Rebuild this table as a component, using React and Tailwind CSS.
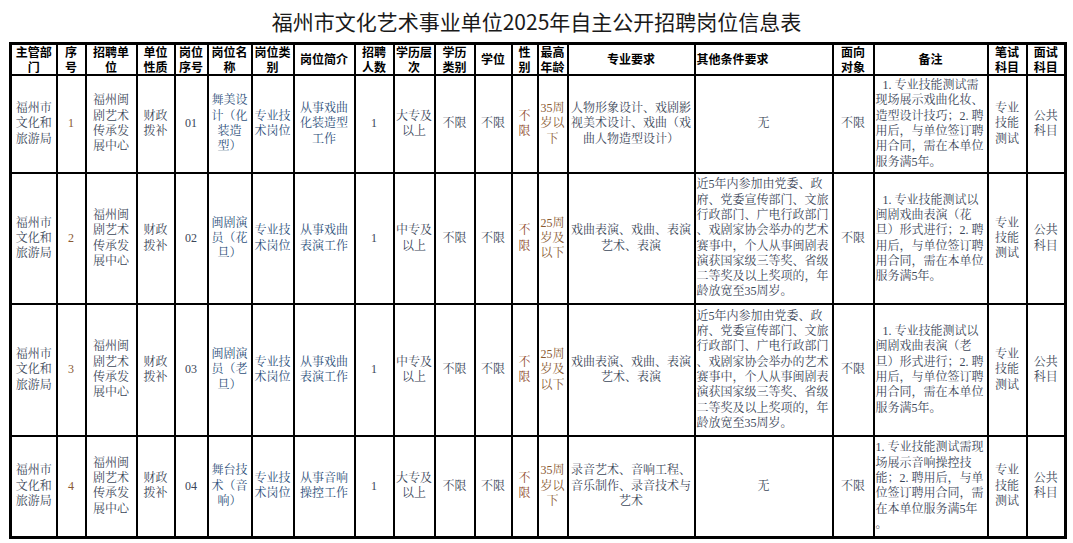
import React from 'react'

const serif = "font-['Liberation_Serif','Noto_Serif_CJK_SC','Noto_Sans_CJK_SC',serif]"

const colWidths = [
  'w-[46px]', 'w-[29px]', 'w-[51px]', 'w-[38px]', 'w-[33px]', 'w-[44px]', 'w-[42px]',
  'w-[61px]', 'w-[39px]', 'w-[41px]', 'w-[40px]', 'w-[37px]', 'w-[26px]', 'w-[30px]',
  'w-[127px]', 'w-[138px]', 'w-[41px]', 'w-[114px]', 'w-[39px]', 'w-[39px]',
]

const headers = [
  ['主管部', '门'], ['序', '号'], ['招聘单', '位'], ['单位', '性质'], ['岗位', '序号'],
  ['岗位名', '称'], ['岗位类', '别'], ['岗位简介'], ['招聘', '人数'], ['学历层', '次'],
  ['学历', '类别'], ['学位'], ['性', '别'], ['最高', '年龄'], ['专业要求'],
  ['其他条件要求'], ['面向', '对象'], ['备注'], ['笔试', '科目'], ['面试', '科目'],
]

const slate = 'text-[#3b4658]'
const brown = 'text-[#8a5a32]'
const rust = 'text-[#8f4a2c]'
const blue = 'text-[#2d4f7a]'

const otherReq = [
  '近5年内参加由党委、政',
  '府、党委宣传部门、文旅',
  '行政部门、广电行政部门',
  '、戏剧家协会举办的艺术',
  '赛事中，个人从事闽剧表',
  '演获国家级三等奖、省级',
  '二等奖及以上奖项的，年',
  '龄放宽至35周岁。',
]

const rows = [
  {
    h: 'h-[98px]',
    cells: [
      { lines: ['福州市', '文化和', '旅游局'], cls: slate },
      { lines: ['1'], cls: brown },
      { lines: ['福州闽', '剧艺术', '传承发', '展中心'], cls: slate },
      { lines: ['财政', '拨补'], cls: slate },
      { lines: ['01'], cls: slate },
      { lines: ['舞美设', '计（化', '装造', '型）'], cls: blue },
      { lines: ['专业技', '术岗位'], cls: blue },
      { lines: ['从事戏曲', '化装造型', '工作'], cls: blue },
      { lines: ['1'], cls: slate },
      { lines: ['大专及', '以上'], cls: slate },
      { lines: ['不限'], cls: slate },
      { lines: ['不限'], cls: slate },
      { lines: ['不', '限'], cls: rust },
      { lines: ['35周', '岁以', '下'], cls: brown },
      { lines: ['人物形象设计、戏剧影', '视美术设计、戏曲（戏', '曲人物造型设计）'], cls: slate },
      { lines: ['无'], cls: slate },
      { lines: ['不限'], cls: slate },
      {
        lines: ['1. 专业技能测试需', '现场展示戏曲化妆、', '造型设计技巧；2. 聘', '用后，与单位签订聘', '用合同，需在本单位', '服务满5年。'],
        cls: slate + ' text-left',
        indent: true,
      },
      { lines: ['专业', '技能', '测试'], cls: slate },
      { lines: ['公共', '科目'], cls: slate },
    ],
  },
  {
    h: 'h-[131px]',
    cells: [
      { lines: ['福州市', '文化和', '旅游局'], cls: slate },
      { lines: ['2'], cls: brown },
      { lines: ['福州闽', '剧艺术', '传承发', '展中心'], cls: slate },
      { lines: ['财政', '拨补'], cls: slate },
      { lines: ['02'], cls: slate },
      { lines: ['闽剧演', '员（花', '旦）'], cls: blue },
      { lines: ['专业技', '术岗位'], cls: blue },
      { lines: ['从事戏曲', '表演工作'], cls: blue },
      { lines: ['1'], cls: slate },
      { lines: ['中专及', '以上'], cls: slate },
      { lines: ['不限'], cls: slate },
      { lines: ['不限'], cls: slate },
      { lines: ['不', '限'], cls: rust },
      { lines: ['25周', '岁及', '以下'], cls: brown },
      { lines: ['戏曲表演、戏曲、表演', '艺术、表演'], cls: slate },
      { lines: otherReq, cls: slate + ' text-left' },
      { lines: ['不限'], cls: slate },
      {
        lines: ['1. 专业技能测试以', '闽剧戏曲表演（花', '旦）形式进行；2. 聘', '用后，与单位签订聘', '用合同，需在本单位', '服务满5年。'],
        cls: slate + ' text-left',
        indent: true,
      },
      { lines: ['专业', '技能', '测试'], cls: slate },
      { lines: ['公共', '科目'], cls: slate },
    ],
  },
  {
    h: 'h-[132px]',
    cells: [
      { lines: ['福州市', '文化和', '旅游局'], cls: slate },
      { lines: ['3'], cls: brown },
      { lines: ['福州闽', '剧艺术', '传承发', '展中心'], cls: slate },
      { lines: ['财政', '拨补'], cls: slate },
      { lines: ['03'], cls: slate },
      { lines: ['闽剧演', '员（老', '旦）'], cls: blue },
      { lines: ['专业技', '术岗位'], cls: blue },
      { lines: ['从事戏曲', '表演工作'], cls: blue },
      { lines: ['1'], cls: slate },
      { lines: ['中专及', '以上'], cls: slate },
      { lines: ['不限'], cls: slate },
      { lines: ['不限'], cls: slate },
      { lines: ['不', '限'], cls: rust },
      { lines: ['25周', '岁及', '以下'], cls: brown },
      { lines: ['戏曲表演、戏曲、表演', '艺术、表演'], cls: slate },
      { lines: otherReq, cls: slate + ' text-left' },
      { lines: ['不限'], cls: slate },
      {
        lines: ['1. 专业技能测试以', '闽剧戏曲表演（老', '旦）形式进行；2. 聘', '用后，与单位签订聘', '用合同，需在本单位', '服务满5年。'],
        cls: slate + ' text-left',
        indent: true,
      },
      { lines: ['专业', '技能', '测试'], cls: slate },
      { lines: ['公共', '科目'], cls: slate },
    ],
  },
  {
    h: 'h-[101px]',
    cells: [
      { lines: ['福州市', '文化和', '旅游局'], cls: slate },
      { lines: ['4'], cls: brown },
      { lines: ['福州闽', '剧艺术', '传承发', '展中心'], cls: slate },
      { lines: ['财政', '拨补'], cls: slate },
      { lines: ['04'], cls: slate },
      { lines: ['舞台技', '术（音', '响）'], cls: blue },
      { lines: ['专业技', '术岗位'], cls: blue },
      { lines: ['从事音响', '操控工作'], cls: blue },
      { lines: ['1'], cls: slate },
      { lines: ['大专及', '以上'], cls: slate },
      { lines: ['不限'], cls: slate },
      { lines: ['不限'], cls: slate },
      { lines: ['不', '限'], cls: rust },
      { lines: ['35周', '岁以', '下'], cls: brown },
      { lines: ['录音艺术、音响工程、', '音乐制作、录音技术与', '艺术'], cls: slate },
      { lines: ['无'], cls: slate },
      { lines: ['不限'], cls: slate },
      {
        lines: ['1. 专业技能测试需现', '场展示音响操控技', '能；2. 聘用后，与单', '位签订聘用合同，需', '在本单位服务满5年', '。'],
        cls: slate + ' text-left',
      },
      { lines: ['专业', '技能', '测试'], cls: slate },
      { lines: ['公共', '科目'], cls: slate },
    ],
  },
]

function Lines({ lines, indent }) {
  return lines.map((l, i) => (
    <div key={i} className={'whitespace-nowrap' + (indent && i === 0 ? ' pl-[7px]' : '')}>
      {l}
    </div>
  ))
}

export default function App() {
  return (
    <div className="w-[1073px] h-[543px] bg-white overflow-hidden">
      {/* Title */}
      <div className="h-[42px] flex items-center justify-center">
        <h1 className="text-[21px] leading-none text-[#1a1a1a] font-['Noto_Sans_CJK_SC',sans-serif] font-normal">
          福州市文化艺术事业单位2025年自主公开招聘岗位信息表
        </h1>
      </div>

      <div className="pl-[9px]">
        <table className="table-fixed border-collapse w-[1055px] border-[3px] border-black">
          <colgroup>
            {colWidths.map((w, i) => (
              <col key={i} className={w} />
            ))}
          </colgroup>
          <thead>
            <tr className="h-[31px]">
              {headers.map((lines, i) => (
                <th
                  key={i}
                  className={
                    "border-2 border-black p-0 align-middle font-bold text-[12px] leading-[14.5px] text-black font-['Noto_Sans_CJK_SC',sans-serif] " +
                    (i === 15 ? 'text-left pl-[1px]' : 'text-center')
                  }
                >
                  <Lines lines={lines} />
                </th>
              ))}
            </tr>
          </thead>
          <tbody>
            {rows.map((row, r) => (
              <tr key={r} className={row.h}>
                {row.cells.map((c, i) => (
                  <td
                    key={i}
                    className={`border-2 border-black px-[1px] py-0 align-middle text-center text-[12px] leading-[15.3px] ${serif} ${c.cls}`}
                  >
                    <Lines lines={c.lines} indent={c.indent} />
                  </td>
                ))}
              </tr>
            ))}
          </tbody>
        </table>
      </div>
    </div>
  )
}
